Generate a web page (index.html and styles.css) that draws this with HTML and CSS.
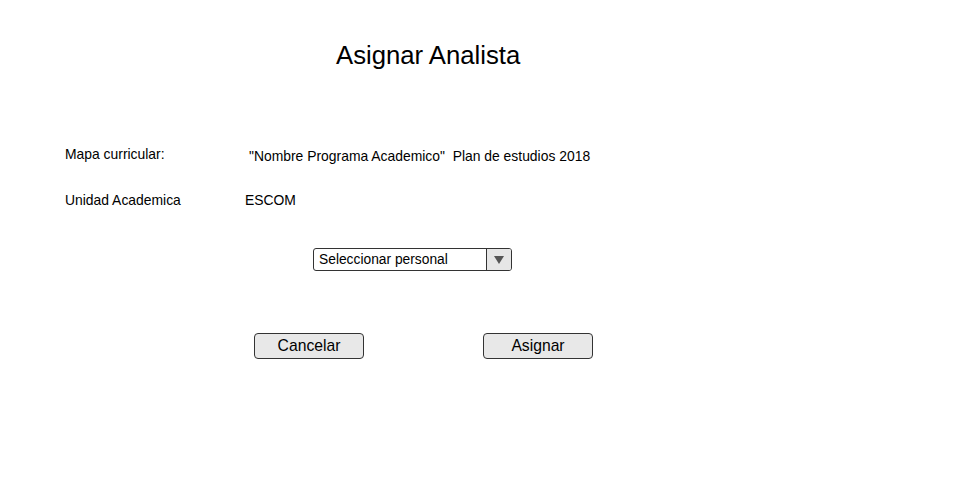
FILE: index.html
```html
<!DOCTYPE html>
<html lang="es">
<head>
<meta charset="utf-8">
<title>Asignar Analista</title>
<link rel="stylesheet" href="styles.css">
</head>
<body>
<main class="page">
  <h1 class="title">Asignar Analista</h1>
  <section class="info">
    <div class="row">
      <span class="label label-first">Mapa curricular:</span>
      <span class="value value-first">"Nombre Programa Academico"&nbsp; Plan de estudios 2018</span>
    </div>
    <div class="row">
      <span class="label">Unidad Academica</span>
      <span class="value">ESCOM</span>
    </div>
  </section>
  <div class="select-row">
    <div class="select">
      <span class="select-text">Seleccionar personal</span>
      <span class="select-arrow"><svg width="10" height="8" viewBox="0 0 10 8"><path d="M0 0 L10 0 L5 8 Z" fill="#555"/></svg></span>
    </div>
  </div>
  <div class="actions">
    <button class="btn" type="button">Cancelar</button>
    <button class="btn" type="button">Asignar</button>
  </div>
</main>
</body>
</html>
```
FILE: styles.css
```css
html, body {
  margin: 0;
  padding: 0;
  background: #ffffff;
}

.page {
  font-family: "Liberation Sans", Arial, sans-serif;
  color: #000;
  width: 971px;
  height: 483px;
  display: flex;
  flex-direction: column;
}

.title {
  margin: 0;
  padding: 40px 0 0 336px;
  font-size: 25.7px;
  font-weight: normal;
  line-height: 30px;
}

.info {
  margin-top: 77px;
  padding-left: 65px;
  display: flex;
  flex-direction: column;
  gap: 29px;
  font-size: 13.9px;
  line-height: 16px;
}

.row {
  display: flex;
  height: 16px;
}

.label {
  width: 180px;
}

.label-first {
  margin-top: -1px;
}

.value-first {
  margin-top: 1px;
  padding-left: 4px;
}

.select-row {
  margin-top: 40px;
  padding-left: 313px;
  display: flex;
}

.select {
  width: 199px;
  height: 23px;
  box-sizing: border-box;
  border: 1px solid #333;
  border-radius: 3px;
  display: flex;
  overflow: hidden;
  font-size: 13.8px;
}

.select-text {
  flex: 1;
  padding-left: 5px;
  line-height: 21px;
}

.select-arrow {
  width: 24px;
  border-left: 1px solid #333;
  background: #e6e6e6;
  display: flex;
  align-items: center;
  justify-content: center;
}

.actions {
  margin-top: 62px;
  padding-left: 254px;
  display: flex;
  gap: 119px;
}

.btn {
  width: 110px;
  height: 26px;
  box-sizing: border-box;
  border: 1px solid #333;
  border-radius: 4px;
  background: #e8e8e8;
  font-family: "Liberation Sans", Arial, sans-serif;
  font-size: 15.7px;
  color: #000;
  padding: 0 0 1px;
  line-height: 22px;
}
```
